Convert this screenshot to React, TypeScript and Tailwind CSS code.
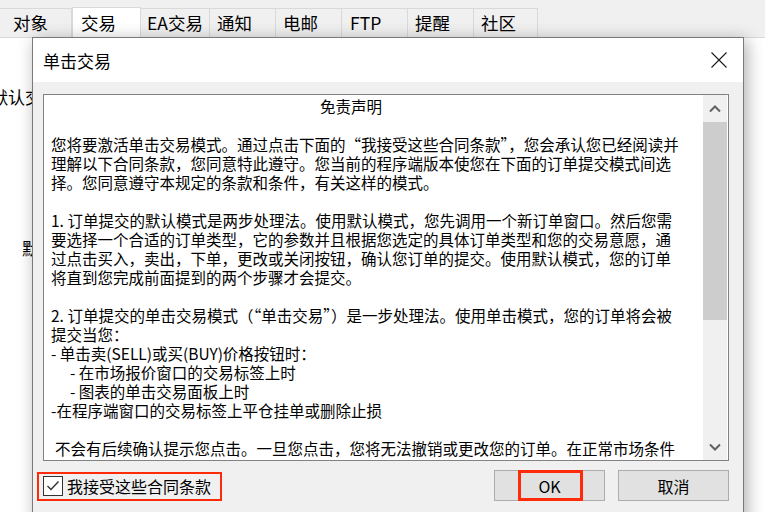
import React from "react";

const tabs: { label: string; w: number; pl: number; active?: boolean }[] = [
  { label: "对象", w: 72, pl: 13 },
  { label: "交易", w: 69, pl: 8, active: true },
  { label: "EA交易", w: 69, pl: 6 },
  { label: "通知", w: 66, pl: 7 },
  { label: "电邮", w: 66, pl: 7 },
  { label: "FTP", w: 66, pl: 8 },
  { label: "提醒", w: 66, pl: 7 },
  { label: "社区", w: 64, pl: 7 },
];

const lines: { t: string; pl?: number }[] = [
  { t: "免责声明", pl: 269 },
  { t: "" },
  { t: "您将要激活单击交易模式。通过点击下面的“我接受这些合同条款”，您会承认您已经阅读并" },
  { t: "理解以下合同条款，您同意特此遵守。您当前的程序端版本使您在下面的订单提交模式间选" },
  { t: "择。您同意遵守本规定的条款和条件，有关这样的模式。" },
  { t: "" },
  { t: "1. 订单提交的默认模式是两步处理法。使用默认模式，您先调用一个新订单窗口。然后您需" },
  { t: "要选择一个合适的订单类型，它的参数并且根据您选定的具体订单类型和您的交易意愿，通" },
  { t: "过点击买入，卖出，下单，更改或关闭按钮，确认您订单的提交。使用默认模式，您的订单" },
  { t: "将直到您完成前面提到的两个步骤才会提交。" },
  { t: "" },
  { t: "2. 订单提交的单击交易模式（“单击交易”）是一步处理法。使用单击模式，您的订单将会被" },
  { t: "提交当您：" },
  { t: "- 单击卖(SELL)或买(BUY)价格按钮时：" },
  { t: "- 在市场报价窗口的交易标签上时", pl: 19 },
  { t: "- 图表的单击交易面板上时", pl: 19 },
  { t: "-在程序端窗口的交易标签上平仓挂单或删除止损" },
  { t: "" },
  { t: "不会有后续确认提示您点击。一旦您点击，您将无法撤销或更改您的订单。在正常市场条件", pl: 4 },
];

export default function App() {
  return (
    <div className="relative w-[765px] h-[512px] overflow-hidden bg-white text-black font-['Noto_Sans_CJK_SC','Noto_Sans',sans-serif]">
      {/* Tab strip */}
      <div className="h-[38px] bg-[#f0f0f0] border-b border-[#d9d9d9] flex items-end">
        {tabs.map((t) => (
          <div
            key={t.label}
            style={{ width: t.w, paddingLeft: t.pl }}
            className={
              t.active
                ? "h-[31px] -mb-px bg-white border border-b-0 border-[#d9d9d9] flex items-center text-[17.5px] leading-none whitespace-nowrap"
                : "h-[29px] bg-[#f0f0f0] border-t border-r border-[#d9d9d9] flex items-center text-[17.5px] leading-none whitespace-nowrap"
            }
          >
            {t.label}
          </div>
        ))}
      </div>

      {/* Background page content */}
      <div className="text-[17px] leading-[20px] whitespace-nowrap">
        <div className="mt-[49px] ml-[-9px]">默认交易模式</div>
        <div className="mt-[131px] ml-[22px]">默认</div>
      </div>

      {/* Dialog */}
      <div className="absolute left-[32px] top-[37px] w-[712px] h-[490px] border border-[#7a7a7a] bg-[#f0f0f0] shadow-[3px_3px_16px_rgba(0,0,0,0.32)] flex flex-col">
        <div className="h-[44px] bg-white flex items-center justify-between pl-[10px] pr-[16px] shrink-0">
          <span className="text-[17px] leading-none">单击交易</span>
          <svg width="16" height="16" viewBox="0 0 16 16">
            <path d="M0.5 0.5 L15.5 15.5 M15.5 0.5 L0.5 15.5" stroke="#1a1a1a" strokeWidth="1.1" fill="none" />
          </svg>
        </div>
        <div className="px-[10px] pt-[12px]">
          {/* Text box */}
          <div className="w-[686px] h-[367px] border border-[#828282] bg-white flex">
            <div className="flex-1 overflow-hidden pl-[7px] pt-[2px] text-[15.5px] leading-[19px] whitespace-pre">
              {lines.map((l, i) => (
                <div key={i} className="h-[19px] flex">
                  <span style={{ marginLeft: l.pl ?? 0 }}>{l.t}</span>
                </div>
              ))}
            </div>
            <div className="w-[24px] mr-px bg-[#f0f0f0] flex flex-col">
              <div className="h-[27px] flex items-center justify-center">
                <svg width="12" height="8" viewBox="0 0 12 8">
                  <path d="M1 6.5 L6 1.5 L11 6.5" stroke="#606060" strokeWidth="2" fill="none" />
                </svg>
              </div>
              <div className="h-[198px] bg-[#cdcdcd]" />
              <div className="flex-1" />
              <div className="h-[27px] flex items-center justify-center">
                <svg width="12" height="8" viewBox="0 0 12 8">
                  <path d="M1 1.5 L6 6.5 L11 1.5" stroke="#606060" strokeWidth="2" fill="none" />
                </svg>
              </div>
            </div>
          </div>

          {/* Bottom row */}
          <div className="mt-[9px] h-[31px] flex items-center">
            <div className="relative h-[31px] flex items-center">
              <div className="w-[20px] h-[20px] border border-[#333333] bg-white flex items-center justify-center">
                <svg width="14" height="12" viewBox="0 0 14 12">
                  <path d="M1.5 6 L5 9.5 L12.5 1.5" stroke="#333333" strokeWidth="1.4" fill="none" />
                </svg>
              </div>
              <span className="ml-[4px] text-[16px] leading-none whitespace-nowrap">我接受这些合同条款</span>
              <div className="absolute left-[-6px] top-[2px] w-[185px] h-[29px] border-2 border-[#ff2a0a]" />
            </div>
            <div className="flex-1" />
            <div className="relative w-[111px] h-[31px] bg-[#e1e1e1] border border-[#adadad] flex items-center justify-center text-[16px] leading-none">
              OK
              <div className="absolute left-[23px] top-[-1px] w-[65px] h-[31px] border-[3px] border-[#ff2a0a]" />
            </div>
            <div className="ml-[13px] mr-[4px] w-[111px] h-[31px] bg-[#e1e1e1] border border-[#adadad] flex items-center justify-center text-[16px] leading-none">
              取消
            </div>
          </div>
        </div>
      </div>
    </div>
  );
}
